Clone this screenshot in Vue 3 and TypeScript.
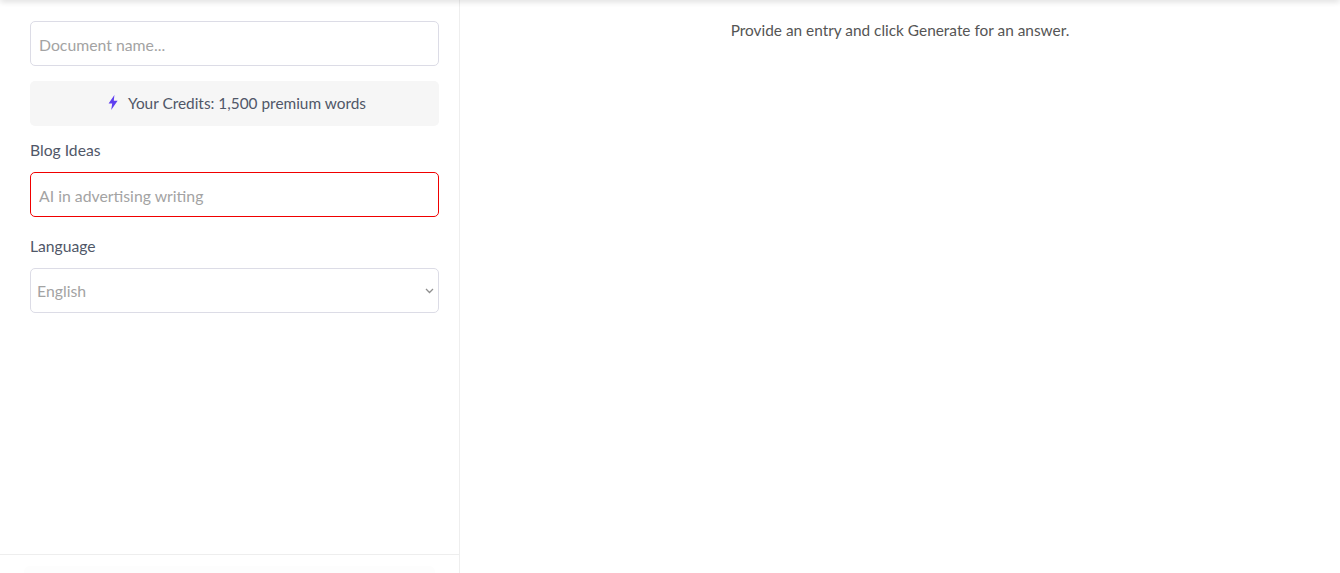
<script setup lang="ts">
const answerHint = 'Provide an entry and click Generate for an answer.'
</script>

<template>
  <div class="page">
    <div class="top-shadow"></div>
    <aside class="side">
      <div class="form">
        <input class="field" type="text" placeholder="Document name..." />
        <div class="credits">
          <svg class="bolt" width="10" height="15" viewBox="0 0 10 15">
            <path d="M6.4 0 L0.6 8.4 H4.2 L3.2 15 L9.6 5.8 H5.8 Z" fill="#5f3ff0" />
          </svg>
          <span class="credits-text">Your Credits: 1,500 premium words</span>
        </div>
        <label class="label first">Blog Ideas</label>
        <input class="field error" type="text" placeholder="AI in advertising writing" />
        <label class="label">Language</label>
        <div class="select">
          <span>English</span>
          <svg width="9" height="6" viewBox="0 0 9 6">
            <path d="M1 1 L4.5 4.5 L8 1" fill="none" stroke="#8f8f8f" stroke-width="1.3" />
          </svg>
        </div>
      </div>
      <div class="side-foot">
        <div class="foot-btn"></div>
      </div>
    </aside>
    <main class="result">
      <p>{{ answerHint }}</p>
    </main>
  </div>
</template>

<style scoped>
.page {
  display: flex;
  position: relative;
  height: 573px;
  overflow: hidden;
  background: #fff;
  font-family: Lato, "Noto Sans", sans-serif;
  font-size: 15.4px;
  color: #4b5563;
}

.top-shadow {
  position: absolute;
  top: -4px;
  left: 0;
  right: 0;
  height: 4px;
  box-shadow: 0 1px 6px rgba(0, 0, 0, 0.2);
}

.side {
  display: flex;
  flex-direction: column;
  justify-content: space-between;
  box-sizing: border-box;
  width: 460px;
  border-right: 1px solid #eeeeee;
}

.form {
  display: flex;
  flex-direction: column;
  padding: 21px 20px 0 30px;
}

.field,
.select {
  box-sizing: border-box;
  width: 409px;
  height: 45px;
  border: 1px solid #dcdce6;
  border-radius: 5px;
  background: #fff;
  font: inherit;
  font-size: 15.8px;
  color: #a3a3a3;
}

.field {
  padding: 1px 8px 0;
  outline: none;
}

.field::placeholder {
  color: #a3a3a3;
  opacity: 1;
}

.field.error {
  border-color: #f00000;
}

.credits {
  display: flex;
  align-items: center;
  justify-content: center;
  gap: 10px;
  height: 45px;
  margin-top: 15px;
  padding-left: 5px;
  border-radius: 5px;
  background: #f6f6f6;
  color: #505768;
}

.credits-text {
  margin-top: -2px;
}

.bolt {
  margin-top: -3px;
}

.label {
  height: 20px;
  margin: 19px 0 12px;
  font-size: 15.7px;
  line-height: 20px;
  color: #505768;
}

.label.first {
  margin: 14px 0 12px;
}

.select {
  display: flex;
  align-items: center;
  justify-content: space-between;
  padding: 0 4px 0 6px;
}

.side-foot {
  box-sizing: border-box;
  height: 19px;
  padding: 11px 24px 0;
  border-top: 1px solid #eeeeee;
}

.foot-btn {
  height: 20px;
  border-radius: 6px;
  background: #fdfdfd;
}

.result {
  flex: 1;
  padding-top: 20px;
  text-align: center;
  color: #555555;
}

.result p {
  margin: 0;
  line-height: 20px;
}
</style>
